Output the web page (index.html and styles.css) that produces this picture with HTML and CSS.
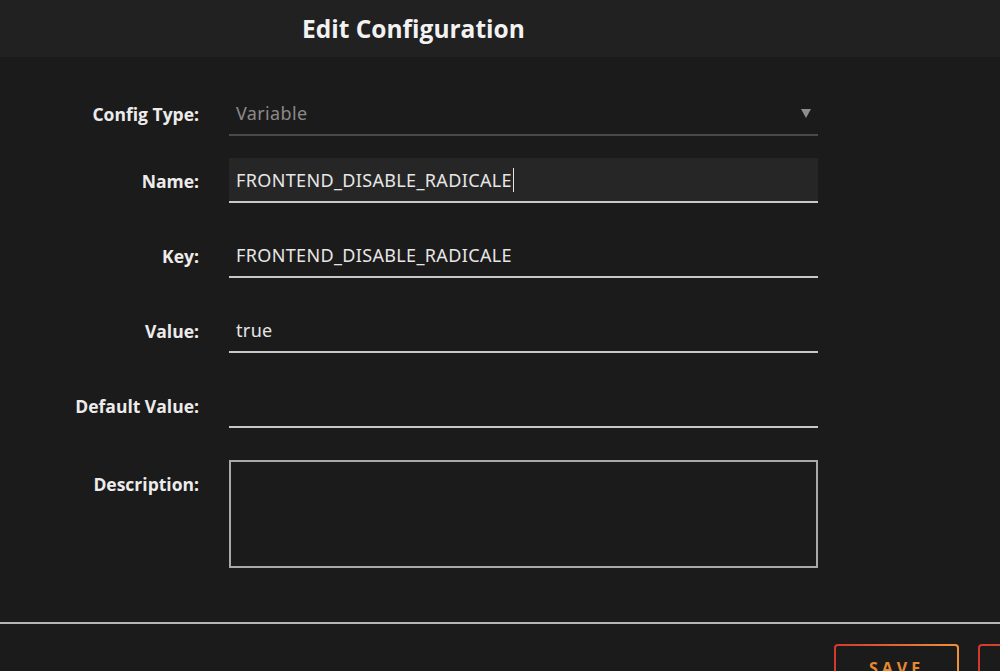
FILE: index.html
```html
<!DOCTYPE html>
<html lang="en">
<head>
    <meta charset="UTF-8">
    <meta name="viewport" content="width=device-width, initial-scale=1.0">
    <title>Edit Configuration</title>
    <link rel="stylesheet" href="styles.css">
</head>
<body>
    <div class="modal">
        <div class="modal-header">
            <h1 class="modal-title">Edit Configuration</h1>
        </div>

        <form class="config-form">
            <div class="row row-type">
                <label class="label">Config Type:</label>
                <div class="field select">
                    <span class="placeholder">Variable</span>
                    <span class="arrow"></span>
                </div>
            </div>

            <div class="row">
                <label class="label">Name:</label>
                <div class="field active">FRONTEND_DISABLE_RADICALE<span class="caret"></span></div>
            </div>

            <div class="row">
                <label class="label">Key:</label>
                <div class="field">FRONTEND_DISABLE_RADICALE</div>
            </div>

            <div class="row">
                <label class="label">Value:</label>
                <div class="field">true</div>
            </div>

            <div class="row row-default">
                <label class="label">Default Value:</label>
                <div class="field"></div>
            </div>

            <div class="row row-desc">
                <label class="label">Description:</label>
                <div class="textarea"></div>
            </div>
        </form>

        <div class="modal-footer">
            <button type="button" class="btn">SAVE</button>
            <button type="button" class="btn btn-wide">CANCEL</button>
        </div>
    </div>
</body>
</html>
```

FILE: styles.css
```css
/* dark config modal */

body {
    margin: 0;
    padding: 0;
    height: 100vh;
    overflow: hidden;
    background-color: #1c1b1b;
    color: #ececec;
    font-family: "Open Sans", "Noto Sans", sans-serif;
}

.modal-header {
    height: 57px;
    background-color: #212121;
    padding-left: 302px;
    box-sizing: border-box;
}

.modal-title {
    margin: 0;
    line-height: 57px;
    font-size: 24.5px;
    font-weight: 700;
    color: #f2f2f2;
}

.config-form {
    padding-top: 34px;
    height: 567px;
    box-sizing: border-box;
    border-bottom: 2px solid #b5b5b5;
}

.row {
    display: grid;
    grid-template-columns: 199px 589px;
    column-gap: 30px;
    margin-bottom: 30px;
}

.row-type {
    margin-bottom: 22px;
}

.row-default {
    margin-bottom: 32px;
}

.label {
    align-self: center;
    text-align: right;
    font-size: 17.5px;
    font-weight: 700;
    color: #ececec;
}

.field {
    height: 45px;
    box-sizing: border-box;
    padding: 0 7px;
    border-bottom: 2px solid #c8c8c8;
    display: flex;
    align-items: center;
    font-family: "Noto Sans", sans-serif;
    font-size: 18px;
    letter-spacing: 0.35px;
    color: #e6e6e6;
}

.select {
    justify-content: space-between;
    border-bottom: 2px solid #4a4a4a;
}

.placeholder {
    color: #8a8a8a;
}

.arrow {
    width: 0;
    height: 0;
    margin-right: 0;
    margin-top: 1px;
    border-left: 5px solid transparent;
    border-right: 5px solid transparent;
    border-top: 9px solid #8e8e8e;
}

.active {
    background-color: #262626;
}

.caret {
    display: inline-block;
    width: 1px;
    height: 24px;
    margin-left: 1px;
    background-color: #e6e6e6;
}

.row-desc .label {
    align-self: start;
    padding-top: 12px;
}

.textarea {
    height: 108px;
    box-sizing: border-box;
    border: 2px solid #a9a9a9;
}

.modal-footer {
    display: flex;
    gap: 19px;
    padding: 20px 0 0 834px;
}

.btn {
    flex: none;
    width: 125px;
    height: 48px;
    border: 2px solid transparent;
    border-radius: 4px;
    background: linear-gradient(#1c1b1b, #1c1b1b) padding-box,
                linear-gradient(90deg, #d4382d, #f0923b) border-box;
    color: #e8892f;
    font-family: "Open Sans", sans-serif;
    font-size: 16px;
    font-weight: 700;
    letter-spacing: 4px;
    cursor: pointer;
}

.btn-wide {
    width: 200px;
}
```
